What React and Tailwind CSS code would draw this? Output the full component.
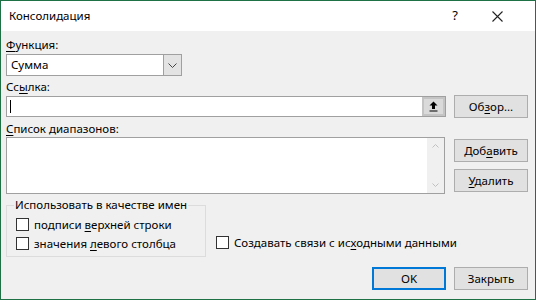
import React from "react";

const font = { fontFamily: '"Noto Sans", "DejaVu Sans", sans-serif' };

function U({ children }) {
  return <span className="underline underline-offset-2">{children}</span>;
}

function Btn({ children, primary }) {
  return (
    <button
      className={
        primary
          ? "w-[74px] h-[23px] bg-[#e1e1e1] border-2 border-[#0078d7] text-[11.5px] text-black leading-none"
          : "w-[74px] h-[23px] bg-[#e1e1e1] border border-[#adadad] text-[11.5px] text-black leading-none"
      }
    >
      {children}
    </button>
  );
}

function Check({ children }) {
  return (
    <div className="flex items-center h-[19px] gap-[5px]">
      <span className="w-[13px] h-[13px] border border-[#333333] bg-white shrink-0" />
      <span className="text-[11.5px] text-black leading-none">{children}</span>
    </div>
  );
}

export default function App() {
  return (
    <div
      style={font}
      className="w-[536px] h-[300px] border border-[#1e7145] flex flex-col bg-[#f0f0f0] text-black"
    >
      {/* title bar */}
      <div className="h-[30px] bg-white flex items-center pl-[8px] shrink-0">
        <span className="text-[11.5px] flex-1">Консолидация</span>
        <span className="text-[13px] mr-[34px]">?</span>
        <svg width="11" height="11" viewBox="0 0 11 11" className="mr-[32px]">
          <path d="M0.5 0.5L10.5 10.5M10.5 0.5L0.5 10.5" stroke="#222" strokeWidth="1.1" />
        </svg>
      </div>

      <div className="flex flex-col pl-[5px] pt-[6px] text-[11.5px]">
        <div className="h-[16px] leading-[16px]">
          <U>Ф</U>ункция:
        </div>
        <div className="mt-[1px] w-[176px] h-[22px] bg-white border border-[#a0a0a0] flex">
          <span className="flex-1 pl-[4px] leading-[20px]">Сумма</span>
          <span className="w-[18px] h-full bg-[#e3e3e3] border-l border-[#a0a0a0] flex items-center justify-center">
            <svg width="9" height="5" viewBox="0 0 9 5">
              <path d="M0.5 0.5L4.5 4.5L8.5 0.5" stroke="#444" fill="none" strokeWidth="1" />
            </svg>
          </span>
        </div>

        <div className="mt-[3px] h-[16px] leading-[16px]">
          Сс<U>ы</U>лка:
        </div>
        <div className="flex items-start">
          <div className="mt-[1px] w-[440px] h-[21px] bg-white border border-[#a0a0a0] flex items-center">
            <span className="ml-[3px] w-px h-[13px] bg-black" />
            <span className="flex-1" />
            <span className="w-[23px] h-[19px] bg-[#dadada] border-2 border-[#c4c4c4] flex items-center justify-center">
              <svg width="9" height="11" viewBox="0 0 9 11">
                <path d="M4.5 0.5L8.5 4.5H6V8H3V4.5H0.5Z" fill="#000" />
                <path d="M0.5 10H8.5" stroke="#000" strokeWidth="1" />
              </svg>
            </span>
          </div>
          <div className="ml-[8px]">
            <Btn>
              Об<U>з</U>ор...
            </Btn>
          </div>
        </div>

        <div className="mt-[3px] h-[16px] leading-[16px]">
          <U>С</U>писок диапазонов:
        </div>
        <div className="flex items-start">
          <div className="w-[439px] h-[57px] bg-white border border-[#a0a0a0] flex justify-end">
            <div className="w-[17px] h-full bg-[#f0f0f0] flex flex-col items-center justify-between py-[6px]">
              <svg width="7" height="4" viewBox="0 0 7 4">
                <path d="M0.5 3.5L3.5 0.5L6.5 3.5" stroke="#c0c0c0" fill="none" />
              </svg>
              <svg width="7" height="4" viewBox="0 0 7 4">
                <path d="M0.5 0.5L3.5 3.5L6.5 0.5" stroke="#c0c0c0" fill="none" />
              </svg>
            </div>
          </div>
          <div className="ml-[9px] mt-[2px] flex flex-col gap-[7px]">
            <Btn>
              Доб<U>а</U>вить
            </Btn>
            <Btn>
              <U>У</U>далить
            </Btn>
          </div>
        </div>

        <div className="flex items-start mt-[3px]">
          <fieldset className="w-[200px] h-[60px] border border-[#dcdcdc] pl-[7px]">
            <legend className="text-[11.5px] leading-[16px] px-[1px]">Использовать в качестве имен</legend>
            <div className="pl-[2px] mt-[2px]">
              <Check>
                подписи <U>в</U>ерхней строки
              </Check>
              <Check>
                значения <U>л</U>евого столбца
              </Check>
            </div>
          </fieldset>
          <div className="ml-[10px] mt-[36px]">
            <Check>
              Создавать связи с ис<U>х</U>одными данными
            </Check>
          </div>
        </div>

        <div className="flex justify-end gap-[8px] mt-[10px] pr-[7px]">
          <Btn primary>OK</Btn>
          <Btn>Закрыть</Btn>
        </div>
      </div>
    </div>
  );
}
